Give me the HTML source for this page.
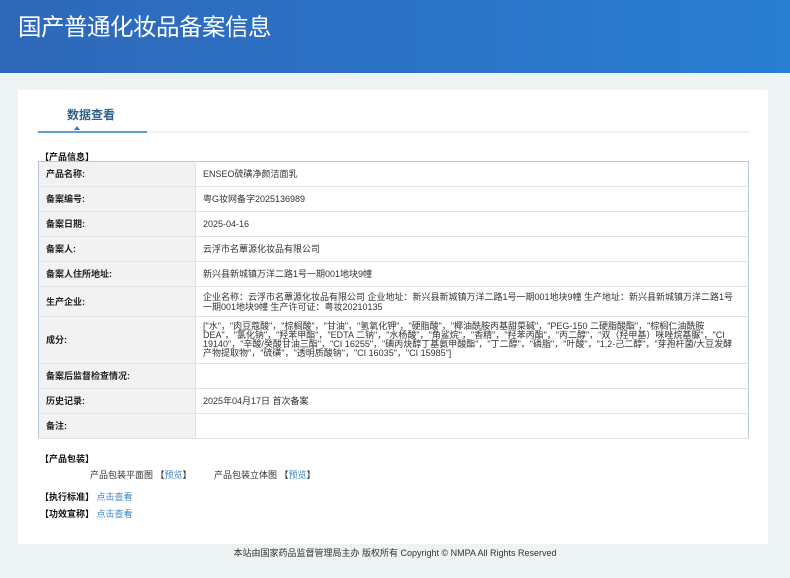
<!DOCTYPE html>
<html><head><meta charset="utf-8"><style>
*{margin:0;padding:0;box-sizing:border-box}
body{width:790px;height:578px;background:#eef3f3;font-family:"Liberation Sans","Noto Sans CJK SC",sans-serif;font-size:9px;color:#333;position:relative;overflow:hidden}
.hd{position:absolute;left:0;top:0;width:790px;height:73px;background:linear-gradient(90deg,#2f68b8 0%,#2b72c6 50%,#2a7fd2 100%)}
.hd h1{position:absolute;left:18px;top:8px;color:#fff;font-size:23.5px;font-weight:normal;font-family:"Noto Sans CJK SC",sans-serif;letter-spacing:-0.5px}
.card{position:absolute;left:18px;top:90px;width:750px;height:454px;background:#fff}
.tab{position:absolute;left:49px;top:16px;font-size:12px;font-weight:bold;color:#2e5f8e}
.line{position:absolute;left:20px;top:41px;width:711px;height:2px;background:#eef0f2}
.line b{position:absolute;left:0;top:0;width:109px;height:2px;background:#5f9fcf}
.tri{position:absolute;left:56px;top:36px;width:0;height:0;border-left:3px solid transparent;border-right:3px solid transparent;border-bottom:4px solid #2e78c0}
.sec{position:absolute;font-weight:bold;color:#111;font-size:9px}
table{position:absolute;left:20px;top:71px;width:711px;border-collapse:collapse;border:1px solid #b7c7d8}
td{border-bottom:1px solid #dde3e8;font-size:9px;vertical-align:middle;line-height:10px}
td.l{width:157px;background:#f2f2f2;font-weight:bold;padding-left:7px;color:#222;border-right:1px solid #dde3e8}
td.v{padding-left:7px;padding-right:14px;color:#333}
a{color:#3f86c4;text-decoration:none}
.ft{position:absolute;left:0;top:546px;width:790px;text-align:center;font-size:9px;color:#333}
</style></head><body>
<div class="hd"><h1>国产普通化妆品备案信息</h1></div>
<div class="card">
<div class="tab">数据查看</div>
<div class="line"><b></b></div><div class="tri"></div>
<div class="sec" style="left:22px;top:60px">【产品信息】</div>
<table>
<tr style="height:25px"><td class="l">产品名称:</td><td class="v">ENSEO硫磺净颜洁面乳</td></tr>
<tr style="height:25px"><td class="l">备案编号:</td><td class="v">粤G妆网备字2025136989</td></tr>
<tr style="height:25px"><td class="l">备案日期:</td><td class="v">2025-04-16</td></tr>
<tr style="height:25px"><td class="l">备案人:</td><td class="v">云浮市名蕈源化妆品有限公司</td></tr>
<tr style="height:25px"><td class="l">备案人住所地址:</td><td class="v">新兴县新城镇万洋二路1号一期001地块9幢</td></tr>
<tr style="height:30px"><td class="l">生产企业:</td><td class="v">企业名称：云浮市名蕈源化妆品有限公司 企业地址：新兴县新城镇万洋二路1号一期001地块9幢 生产地址：新兴县新城镇万洋二路1号一期001地块9幢 生产许可证：粤妆20210135</td></tr>
<tr style="height:47px"><td class="l">成分:</td><td class="v" style="line-height:9px">["水"，"肉豆蔻酸"，"棕榈酸"，"甘油"，"氢氧化钾"，"硬脂酸"，"椰油酰胺丙基甜菜碱"，"PEG-150 二硬脂酸酯"，"棕榈仁油酰胺 DEA"，"氯化钠"，"羟苯甲酯"，"EDTA 二钠"，"水杨酸"，"角鲨烷"，"香精"，"羟苯丙酯"，"丙二醇"，"双（羟甲基）咪唑烷基脲"，"CI 19140"，"辛酸/癸酸甘油三酯"，"CI 16255"，"碘丙炔醇丁基氨甲酸酯"，"丁二醇"，"磷脂"，"叶酸"，"1,2-己二醇"，"芽孢杆菌/大豆发酵产物提取物"，"硫磺"，"透明质酸钠"，"CI 16035"，"CI 15985"]</td></tr>
<tr style="height:25px"><td class="l">备案后监督检查情况:</td><td class="v"></td></tr>
<tr style="height:25px"><td class="l">历史记录:</td><td class="v">2025年04月17日 首次备案</td></tr>
<tr style="height:25px"><td class="l">备注:</td><td class="v"></td></tr>
</table>
<div class="sec" style="left:22px;top:362px">【产品包装】</div>
<div style="position:absolute;left:72px;top:378px">产品包装平面图 【<a>预览</a>】</div>
<div style="position:absolute;left:196px;top:378px">产品包装立体图 【<a>预览</a>】</div>
<div class="sec" style="left:22px;top:400px">【执行标准】 <a style="font-weight:normal">点击查看</a></div>
<div class="sec" style="left:22px;top:417px">【功效宣称】 <a style="font-weight:normal">点击查看</a></div>
</div>
<div class="ft">本站由国家药品监督管理局主办 版权所有 Copyright © NMPA All Rights Reserved</div>
</body></html>
